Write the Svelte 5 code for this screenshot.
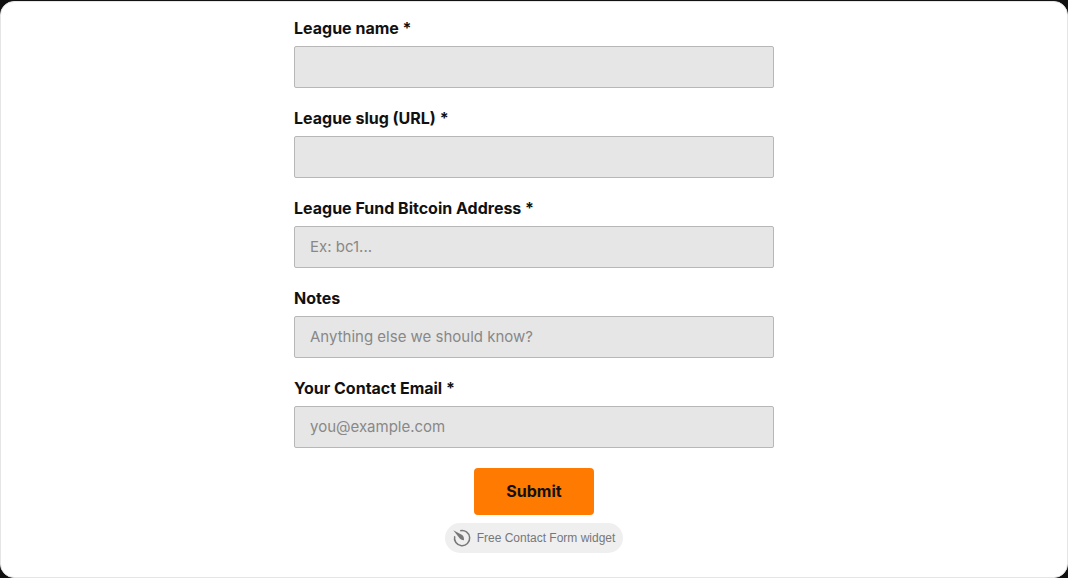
<script>
  const fields = [
    { id: 'league-name', label: 'League name *', placeholder: '' },
    { id: 'league-slug', label: 'League slug (URL) *', placeholder: '' },
    { id: 'fund-address', label: 'League Fund Bitcoin Address *', placeholder: 'Ex: bc1...' },
    { id: 'notes', label: 'Notes', placeholder: 'Anything else we should know?' },
    { id: 'email', label: 'Your Contact Email *', placeholder: 'you@example.com', type: 'email' }
  ];
</script>

<main class="card">
  <form onsubmit={(e) => e.preventDefault()}>
    {#each fields as field}
      <div class="field">
        <label for={field.id}>{field.label}</label>
        <input id={field.id} type={field.type ?? 'text'} placeholder={field.placeholder} />
      </div>
    {/each}
    <button type="submit">Submit</button>
    <a class="badge" href="#widget">
      <svg viewBox="0 0 18 18" width="18" height="18" aria-hidden="true">
        <path d="M7.2 1.7A7.6 7.6 0 1 1 1.7 7.2" fill="none" stroke="#787878" stroke-width="1.5" />
        <path d="M0.3 1.3 9.2 6C10.6 7 11.1 8.8 11 11.2C8.8 11.2 7.2 10.4 6.2 8.8Z" fill="#787878" />
      </svg>
      <span>Free Contact Form widget</span>
    </a>
  </form>
</main>

<style>
  :global(body) {
    padding-top: 1px;
    background: #111;
  }

  .card {
    box-sizing: border-box;
    min-height: calc(100vh - 1px);
    padding: 16px 24px 24px;
    border: 1px solid #e5e5e5;
    border-radius: 14px;
    background: #fff;
    font-family: Inter, sans-serif;
  }

  form {
    display: flex;
    flex-direction: column;
    align-items: center;
    max-width: 480px;
    margin: 0 auto;
  }

  .field {
    display: flex;
    flex-direction: column;
    gap: 8px;
    width: 100%;
    margin-bottom: 20px;
  }

  label {
    color: #111;
    font-size: 16px;
    font-weight: 700;
    line-height: 20px;
  }

  input {
    box-sizing: border-box;
    width: 100%;
    height: 42px;
    padding: 0 15px 2px;
    border: 1px solid #b7b7b7;
    border-radius: 2px;
    background: #e6e6e6;
    color: #111;
    font: 15px Inter, sans-serif;
  }

  input::placeholder {
    color: #888;
    opacity: 1;
  }

  button {
    padding: 12px 32px;
    border: 0;
    border-radius: 4px;
    background: #ff7a00;
    color: #111;
    font: 700 16px/23px Inter, sans-serif;
    cursor: pointer;
  }

  .badge {
    display: flex;
    align-items: center;
    gap: 6px;
    margin-top: 8px;
    padding: 6px 8px;
    border-radius: 15px;
    background: #efefef;
    color: #777;
    font: 12px/18px "Liberation Sans", Arial, sans-serif;
    text-decoration: none;
  }
</style>
